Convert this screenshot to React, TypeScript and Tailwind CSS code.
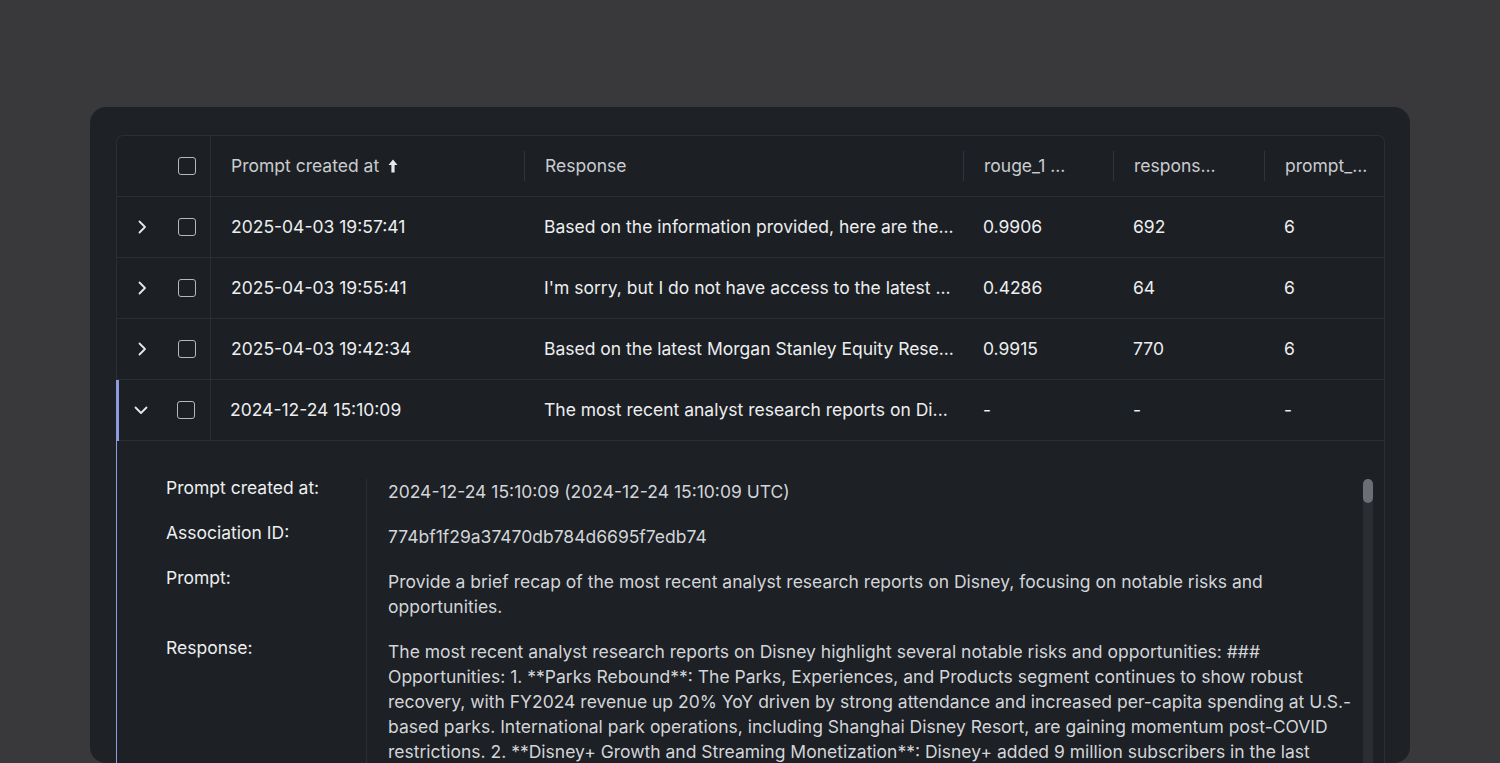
import React from 'react';

const cols = 'grid grid-cols-[47px_47px_313px_439px_150px_151px_1fr]';

const Checkbox = () => (
  <span className="block w-[18px] h-[18px] rounded-[3px] border-[1.5px] border-[#b4b7bb]" />
);

const ChevronRight = () => (
  <svg width="9" height="14" viewBox="0 0 9 14" fill="none">
    <polyline points="1.5,1.5 7,7 1.5,12.5" stroke="#e6e8eb" strokeWidth="1.8" strokeLinecap="round" strokeLinejoin="round" />
  </svg>
);

const ChevronDown = () => (
  <svg width="14" height="9" viewBox="0 0 14 9" fill="none">
    <polyline points="1.5,1.5 7,7 12.5,1.5" stroke="#e6e8eb" strokeWidth="1.8" strokeLinecap="round" strokeLinejoin="round" />
  </svg>
);

const SortUp = () => (
  <svg width="10" height="14" viewBox="0 0 10 14" className="ml-[9px]">
    <path d="M5 0.5 L9.5 6 H6.6 V13.5 H3.4 V6 H0.5 Z" fill="#e6e8eb" />
  </svg>
);

const rows = [
  { date: '2025-04-03 19:57:41', resp: 'Based on the information provided, here are the...', rouge: '0.9906', len: '692', p: '6' },
  { date: '2025-04-03 19:55:41', resp: "I'm sorry, but I do not have access to the latest ...", rouge: '0.4286', len: '64', p: '6' },
  { date: '2025-04-03 19:42:34', resp: 'Based on the latest Morgan Stanley Equity Rese...', rouge: '0.9915', len: '770', p: '6' },
];

const HeaderCell = ({ label, sep = true }: { label: React.ReactNode; sep?: boolean }) => (
  <div className="flex items-center h-full">
    {sep && <span className="w-px h-[30px] bg-[#30343a]" />}
    <span className="pl-[20px] flex items-center">{label}</span>
  </div>
);

export default function App() {
  return (
    <div className="min-h-screen bg-[#39393b] pt-[107px] px-[90px] font-['Inter','Liberation_Sans',sans-serif] text-[17.5px]">
      <div className="h-[656px] overflow-hidden rounded-2xl bg-[#1e2125] pl-[26px] pr-[25px] pt-[28px]">
        <div className="rounded-t-[7px] border border-b-0 border-[#2b2f34] bg-[#1c1f23] h-[700px]">
          {/* Header */}
          <div className={`${cols} h-[61px] border-b border-[#2b2f34] text-[#c9ccd0]`}>
            <div />
            <div className="flex items-center justify-center border-r border-[#2b2f34]">
              <Checkbox />
            </div>
            <HeaderCell sep={false} label={<>Prompt created at<SortUp /></>} />
            <HeaderCell label="Response" />
            <HeaderCell label="rouge_1 ..." />
            <HeaderCell label="respons..." />
            <HeaderCell label="prompt_..." />
          </div>

          {/* Rows */}
          {rows.map((r) => (
            <div key={r.date} className={`${cols} h-[61px] border-b border-[#2b2f34] text-[#eceef0]`}>
              <div className="flex items-center justify-center pl-[3px]">
                <ChevronRight />
              </div>
              <div className="flex items-center justify-center border-r border-[#2b2f34]">
                <Checkbox />
              </div>
              <div className="flex items-center pl-[20px]">{r.date}</div>
              <div className="flex items-center pl-[20px] whitespace-nowrap">{r.resp}</div>
              <div className="flex items-center pl-[20px]">{r.rouge}</div>
              <div className="flex items-center pl-[20px]">{r.len}</div>
              <div className="flex items-center pl-[20px]">{r.p}</div>
            </div>
          ))}

          {/* Expanded row */}
          <div className="relative">
            <span className="absolute -left-px top-0 bottom-0 w-[3px] bg-[#8c9de6]" />
            <div className={`${cols} h-[61px] border-b border-[#2b2f34] text-[#eceef0]`}>
              <div className="flex items-center justify-center pl-[1px]">
                <ChevronDown />
              </div>
              <div className="flex items-center justify-center border-r border-[#2b2f34] pr-[2px]">
                <Checkbox />
              </div>
              <div className="flex items-center pl-[19px]">2024-12-24 15:10:09</div>
              <div className="flex items-center pl-[20px] whitespace-nowrap">The most recent analyst research reports on Di...</div>
              <div className="flex items-center pl-[20px]">-</div>
              <div className="flex items-center pl-[20px]">-</div>
              <div className="flex items-center pl-[20px]">-</div>
            </div>

            {/* Details */}
            <div className="relative bg-[#1d2024] pl-[49px] pr-[28px] pt-[38px]">
              <div className="absolute right-[11px] top-[38px] w-[10px] h-[400px] rounded-full bg-[#2a2e33]">
                <div className="h-[24px] rounded-full bg-[#6b6f75]" />
              </div>
              <div className="grid grid-cols-[200px_1fr] leading-[25px]">
                <div className="-mt-[4px] text-[#eceef0]">Prompt created at:</div>
                <div className="border-l border-[#2b2f34] pl-[21px] pb-[20px] text-[#d2d5d9]">
                  2024-12-24 15:10:09 (2024-12-24 15:10:09 UTC)
                </div>
                <div className="-mt-[4px] text-[#eceef0]">Association ID:</div>
                <div className="border-l border-[#2b2f34] pl-[21px] pb-[20px] text-[#d2d5d9]">
                  774bf1f29a37470db784d6695f7edb74
                </div>
                <div className="-mt-[4px] text-[#eceef0]">Prompt:</div>
                <div className="border-l border-[#2b2f34] pl-[21px] pb-[20px] text-[#d2d5d9]">
                  Provide a brief recap of the most recent analyst research reports on Disney, focusing on notable risks and opportunities.
                </div>
                <div className="-mt-[4px] text-[#eceef0]">Response:</div>
                <div className="border-l border-[#2b2f34] pl-[21px] pb-[20px] text-[#d2d5d9]">
                  The most recent analyst research reports on Disney highlight several notable risks and opportunities: ### Opportunities: 1. **Parks Rebound**: The Parks, Experiences, and Products segment continues to show robust recovery, with FY2024 revenue up 20% YoY driven by strong attendance and increased per-capita spending at U.S.-based parks. International park operations, including Shanghai Disney Resort, are gaining momentum post-COVID restrictions. 2. **Disney+ Growth and Streaming Monetization**: Disney+ added 9 million subscribers in the last quarter, and analysts expect streaming profitability to improve as price increases and the ad-supported tier gain traction.
                </div>
              </div>
            </div>
          </div>
        </div>
      </div>
    </div>
  );
}
